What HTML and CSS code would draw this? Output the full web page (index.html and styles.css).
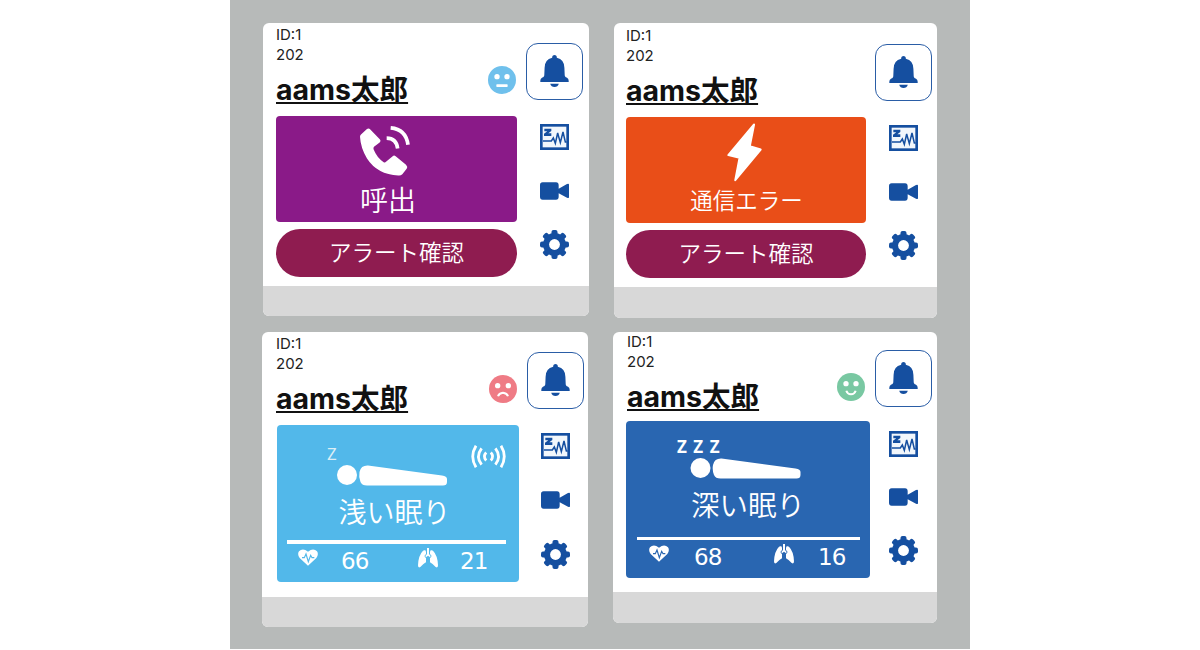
FILE: index.html
```html
<!DOCTYPE html>
<html lang="ja">
<head>
  <meta charset="UTF-8" />
  <title>aams モニター</title>
  <link rel="stylesheet" href="styles.css">
</head>

<body>

  <!-- Icons -->
  <svg class="sprite" width="0" height="0">
    <symbol id="bell" viewBox="0 0 86 97">
      <path d="M36 5 Q37 0 43 0 Q49 0 50 5 L50 8 Q73 13 73 39 L74 62 Q75 67 81 69 Q86 72 86 78 L86 82 L0 82 L0 78 Q0 72 5 69 Q11 67 12 62 L13 39 Q13 13 36 8 Z"/>
      <path d="M30 87 H56 Q53 97 43 97 Q33 97 30 87 Z"/>
    </symbol>
    <symbol id="chart" viewBox="0 0 87 78">
      <rect x="4" y="4" width="79" height="70" fill="#f2f7fc" stroke="#154fa0" stroke-width="8"/>
      <path d="M13 14 H34 V21 L25 28 H34 V36 H12 V29 L22 22 H13 Z"/>
      <path d="M9 51 H34 L40 42 L46 58 L53 27 L61 56 L69 24 L76 54 H80" fill="none" stroke="#154fa0" stroke-width="4.5"/>
    </symbol>
    <symbol id="video" viewBox="0 0 87 54">
      <path d="M8 1 H48 Q56 1 56 10 V20 L81 6 Q87 3 87 8 V46 Q87 50 81 47 L56 34 V44 Q56 53 48 53 H8 Q0 53 0 44 V9 Q0 1 8 1 Z"/>
    </symbol>
    <symbol id="gear" viewBox="-43 -43 86 86">
      <g id="teeth">
        <rect x="-9" y="-43" width="18" height="86" rx="6"/>
        <rect x="-43" y="-9" width="86" height="18" rx="6"/>
      </g>
      <use href="#teeth" transform="rotate(45)"/>
      <circle r="25" fill="none" stroke="#154fa0" stroke-width="18"/>
      <circle r="16" fill="#fff"/>
    </symbol>
    <symbol id="heart" viewBox="0 0 60 51">
      <path d="M30 50 L5 27 Q-3 16 3 7 Q14 -5 30 8 Q46 -5 57 7 Q63 16 55 27 Z" fill="#fff"/>
      <path d="M12 26 H19 L24 15 L31 38 L38 19 L42 26 H49" fill="none" stroke="currentColor" stroke-width="3.5"/>
    </symbol>
    <symbol id="lungs" viewBox="0 0 60 60">
      <path d="M27 0 H33 V18 L38 24 L36 28 L30 23 L24 28 L22 24 L27 18 Z" fill="#fff"/>
      <path d="M21 7 Q24 7 24 13 V18 L19 24 L24 31 V43 Q15 48 7 57 Q0 61 0 52 Q1 22 15 8 Q18 6 21 7 Z" fill="#fff"/>
      <path d="M39 7 Q36 7 36 13 V18 L41 24 L36 31 V43 Q45 48 53 57 Q60 61 60 52 Q59 22 45 8 Q42 6 39 7 Z" fill="#fff"/>
    </symbol>
    <symbol id="sleeper" viewBox="0 0 110 21">
      <circle cx="10" cy="10" r="10"/>
      <path d="M31 .6 Q24 .3 22.5 7 Q21.500 12 23.500 17 Q25 20.500 30 20.500 H106 Q110 20.500 110 17 V14 Q110 11 105 10.500 Z"/>
    </symbol>
  </svg>

  <div class="board">

    <div class="column left">
      <section class="card call">
        <div class="body">
          <div class="main">
            <div class="meta">ID:1<br>202</div>
            <div class="patient">
              <h2 class="name">aams太郎</h2>
              <svg class="face neutral" viewBox="0 0 84 84">
                <circle cx="42" cy="42" r="42"/>
                <circle class="ink" cx="27" cy="32" r="8"/>
                <circle class="ink" cx="57" cy="32" r="8"/>
                <rect class="ink" x="25" y="55" width="34" height="8" rx="2"/>
              </svg>
            </div>
            <div class="panel">
              <svg class="phone" viewBox="300 45 150 152">
                <path d="M303 73 L320 57 Q326 53 331 58 L360 88 Q364 93 359 97 L342 110 Q339 113 341 118 Q351 143 371 156 Q375 158 378 155 L398 138 Q402 134 407 138 L438 164 Q444 170 440 176 L427 192 Q422 197 415 196 Q352 193 321 145 Q302 114 300 80 Q300 76 303 73 Z" fill="#fff"/>
                <path d="M392 53 Q438 57 444 104 M380 84 Q409 84 413 115" fill="none" stroke="#fff" stroke-width="11"/>
              </svg>
              <div class="label">呼出</div>
            </div>
            <button class="confirm">アラート確認</button>
          </div>
          <div class="side">
            <button class="alarm"><svg><use href="#bell"/></svg></button>
            <svg class="chart"><use href="#chart"/></svg>
            <svg class="video"><use href="#video"/></svg>
            <svg class="gear"><use href="#gear"/></svg>
          </div>
        </div>
        <div class="foot"></div>
      </section>

      <section class="card light-sleep">
        <div class="body">
          <div class="main">
            <div class="meta">ID:1<br>202</div>
            <div class="patient">
              <h2 class="name">aams太郎</h2>
              <svg class="face sad" viewBox="0 0 84 84">
                <circle cx="42" cy="42" r="42"/>
                <circle class="ink" cx="26" cy="32" r="8"/>
                <circle class="ink" cx="58" cy="32" r="8"/>
                <path class="mouth" d="M27 64 Q30 54 42 53 Q54 54 57 64"/>
              </svg>
            </div>
            <div class="panel">
              <div class="scene">
                <span class="zzz">Z</span>
                <svg class="sleeper"><use href="#sleeper"/></svg>
                <svg class="signal" viewBox="0 0 104 70">
                  <path d="M45 23 Q34 35 45 47 M59 23 Q70 35 59 47"/>
                  <path d="M31 10 Q12 35 31 60 M73 10 Q92 35 73 60"/>
                  <path d="M14 2 Q-6 35 14 68 M90 2 Q110 35 90 68"/>
                </svg>
              </div>
              <div class="label">浅い眠り</div>
              <div class="vitals">
                <svg class="heart"><use href="#heart"/></svg>
                <span>66</span>
                <svg class="lungs"><use href="#lungs"/></svg>
                <span>21</span>
              </div>
            </div>
          </div>
          <div class="side">
            <button class="alarm"><svg><use href="#bell"/></svg></button>
            <svg class="chart"><use href="#chart"/></svg>
            <svg class="video"><use href="#video"/></svg>
            <svg class="gear"><use href="#gear"/></svg>
          </div>
        </div>
        <div class="foot"></div>
      </section>
    </div>

    <div class="column right">
      <section class="card error">
        <div class="body">
          <div class="main">
            <div class="meta">ID:1<br>202</div>
            <div class="patient">
              <h2 class="name">aams太郎</h2>
            </div>
            <div class="panel">
              <svg class="bolt" viewBox="352 39 106 178">
                <path d="M434 43 L421 109 L454 119 L377 212 L390 144 L356 136 Z" fill="#fff" stroke="#fff" stroke-width="6" stroke-linejoin="round"/>
              </svg>
              <div class="label">通信エラー</div>
            </div>
            <button class="confirm">アラート確認</button>
          </div>
          <div class="side">
            <button class="alarm"><svg><use href="#bell"/></svg></button>
            <svg class="chart"><use href="#chart"/></svg>
            <svg class="video"><use href="#video"/></svg>
            <svg class="gear"><use href="#gear"/></svg>
          </div>
        </div>
        <div class="foot"></div>
      </section>

      <section class="card deep-sleep">
        <div class="body">
          <div class="main">
            <div class="meta">ID:1<br>202</div>
            <div class="patient">
              <h2 class="name">aams太郎</h2>
              <svg class="face happy" viewBox="0 0 84 84">
                <circle cx="42" cy="42" r="42"/>
                <circle class="ink" cx="27" cy="32" r="8"/>
                <circle class="ink" cx="57" cy="32" r="8"/>
                <path class="mouth" d="M28 53 Q31 63 42 64 Q53 63 56 53"/>
              </svg>
            </div>
            <div class="panel">
              <div class="scene">
                <span class="zzz">ZZZ</span>
                <svg class="sleeper"><use href="#sleeper"/></svg>
              </div>
              <div class="label">深い眠り</div>
              <div class="vitals">
                <svg class="heart"><use href="#heart"/></svg>
                <span>68</span>
                <svg class="lungs"><use href="#lungs"/></svg>
                <span>16</span>
              </div>
            </div>
          </div>
          <div class="side">
            <button class="alarm"><svg><use href="#bell"/></svg></button>
            <svg class="chart"><use href="#chart"/></svg>
            <svg class="video"><use href="#video"/></svg>
            <svg class="gear"><use href="#gear"/></svg>
          </div>
        </div>
        <div class="foot"></div>
      </section>
    </div>

  </div>

</body>
</html>
```

FILE: styles.css
```css
* {
  box-sizing: border-box;
}

body {
  margin: 0;
  background: #fff;
  font-family: Inter, "Noto Sans CJK JP", sans-serif;
  overflow: hidden;
}

svg {
  display: block;
  flex: none;
}

.sprite {
  position: absolute;
}

.board {
  display: flex;
  gap: 25px;
  width: 740px;
  height: 649px;
  margin: 0 auto;
  padding: 23px 32px 0;
  background: #b7bab9;
}

.column {
  display: flex;
  flex-direction: column;
}

.left {
  width: 326px;
  gap: 16px;
}

.right {
  width: 324px;
  gap: 14px;
}

/* Cards */
.card {
  display: flex;
  flex-direction: column;
  background: #fff;
  border-radius: 6px;
  overflow: hidden;
}

.call {
  height: 293px;
  margin: 0 -1px 0 1px;
}

.error {
  height: 295px;
  margin-left: 1px;
}

.light-sleep {
  height: 294.5px;
}

.deep-sleep {
  height: 291px;
}

.body {
  flex: 1;
  display: flex;
  justify-content: space-between;
  padding: 2px 6px 0 13px;
}

.error .body {
  padding: 3px 5px 0 12px;
}

.light-sleep .body {
  padding: 2px 4px 0 15px;
}

.deep-sleep .body {
  padding: 0 5px 0 13px;
}

.foot {
  height: 30px;
  background: #d8d8d8;
}

.error .foot,
.deep-sleep .foot {
  height: 31px;
}

.main {
  width: 241px;
}

.error .main {
  width: 240px;
}

.light-sleep .main {
  width: 242px;
}

.deep-sleep .main {
  width: 244px;
}

.meta {
  height: 40px;
  font-size: 15px;
  line-height: 20px;
  color: #222;
}

.patient {
  display: flex;
  justify-content: space-between;
  height: 51px;
}

.light-sleep .patient {
  height: 50.5px;
}

.deep-sleep .patient {
  height: 49px;
}

.name {
  margin: 8px 0 0;
  font-size: 28.5px;
  line-height: 34px;
  font-weight: 700;
  color: #111;
  white-space: nowrap;
  text-decoration: underline;
  text-decoration-thickness: 2px;
  text-decoration-skip-ink: none;
  text-underline-offset: 2px;
}

.light-sleep .meta,
.light-sleep .name {
  margin-left: -1px;
}

.deep-sleep .meta,
.deep-sleep .name {
  margin-left: 1px;
}

.face {
  width: 28px;
  height: 28px;
  margin: 1px 1px 0 0;
}

.light-sleep .face {
  margin-right: 2px;
}

.deep-sleep .face {
  margin-right: 5px;
}

.neutral { fill: #6fc0ec; }
.sad { fill: #ef7b85; }
.happy { fill: #79c8a2; }

.face .ink {
  fill: #fff;
}

.face .mouth {
  fill: none;
  stroke: #fff;
  stroke-width: 6;
}

/* Status panel */
.panel {
  display: flex;
  flex-direction: column;
  align-items: center;
  height: 106px;
  border-radius: 4px;
  color: #fff;
}

.call .panel { background: #8a1a88; }
.error .panel { background: #e94e18; }

.light-sleep .panel {
  height: 157px;
  background: #52b8ea;
  color: #52b8ea;
}

.deep-sleep .panel {
  height: 157px;
  background: #2966b1;
  color: #2966b1;
}

.label {
  font-family: "Noto Sans CJK JP", sans-serif;
  font-size: 28px;
  font-weight: 350;
  line-height: 40px;
  color: #fff;
}

.phone {
  width: 50px;
  height: 51px;
  margin: 9px 23px 3px 0;
}

.call .label {
  margin-right: 17px;
}

.bolt {
  width: 35px;
  height: 59px;
  margin: 6px 3px 0 0;
}

.error .label {
  margin-left: 1px;
  font-size: 22.5px;
  line-height: 34px;
}

.confirm {
  display: block;
  width: 100%;
  height: 48px;
  margin-top: 7px;
  padding: 0 0 3px;
  border: none;
  border-radius: 24px;
  background: #8f1c50;
  color: #fff;
  font-family: "Noto Sans CJK JP", sans-serif;
  font-size: 22.5px;
  font-weight: 350;
  line-height: 45px;
}

/* Sleep panels */
.scene {
  position: relative;
  align-self: stretch;
  height: 66px;
  padding: 20px 0 0 50px;
  fill: #fff;
}

.deep-sleep .scene {
  height: 63px;
  padding: 17px 0 0 51px;
}

.zzz {
  display: block;
  height: 20px;
  font-family: "Noto Sans", sans-serif;
  font-size: 17px;
  line-height: 18px;
  color: #dceef6;
}

.deep-sleep .zzz {
  font-weight: 700;
  letter-spacing: 6.5px;
  color: #fff;
}

.sleeper {
  width: 110px;
  height: 21px;
  margin-left: 10px;
}

.deep-sleep .sleeper {
  width: 111px;
  margin-left: 13px;
}

.signal {
  position: absolute;
  top: 20px;
  right: 13px;
  width: 35px;
  height: 23px;
  fill: none;
  stroke: #fff;
  stroke-width: 8.5;
}

.light-sleep .label {
  margin-right: 7px;
}

.deep-sleep .label {
  font-size: 28.5px;
}

.vitals {
  align-self: stretch;
  display: grid;
  grid-template-columns: 43px 77px 42px auto;
  align-items: start;
  margin: 9px 13px 0 10px;
  padding: 4px 0 0 11px;
  border-top: 4px solid #fff;
}

.deep-sleep .vitals {
  grid-template-columns: 45px 80px 44px auto;
  margin: 13px 10px 0 11px;
  padding-left: 12px;
  border-top-width: 3px;
}

.vitals span {
  padding-top: 1px;
  font-family: "DejaVu Sans", sans-serif;
  font-size: 23px;
  letter-spacing: -0.8px;
  line-height: 24px;
  color: #fff;
}

.heart {
  width: 20px;
  height: 17px;
  margin-top: 1px;
}

.lungs {
  width: 20px;
  height: 20px;
}

/* Icon column */
.side {
  display: flex;
  flex-direction: column;
  align-items: center;
  width: 57px;
  padding-top: 18px;
  fill: #154fa0;
}

.alarm {
  display: flex;
  align-items: center;
  justify-content: center;
  width: 57px;
  height: 57px;
  padding: 0 0 1px;
  border: 1.5px solid #2a5da6;
  border-radius: 12px;
  background: #fff;
  fill: #154fa0;
}

.alarm svg {
  width: 29px;
  height: 32px;
}

.chart {
  width: 29px;
  height: 26px;
  margin-top: 24px;
}

.video {
  width: 29px;
  height: 18px;
  margin-top: 32px;
}

.gear {
  width: 29px;
  height: 29px;
  margin-top: 30px;
}

.deep-sleep .video {
  margin-top: 31px;
}

.light-sleep .gear {
  margin-top: 31px;
}
```
